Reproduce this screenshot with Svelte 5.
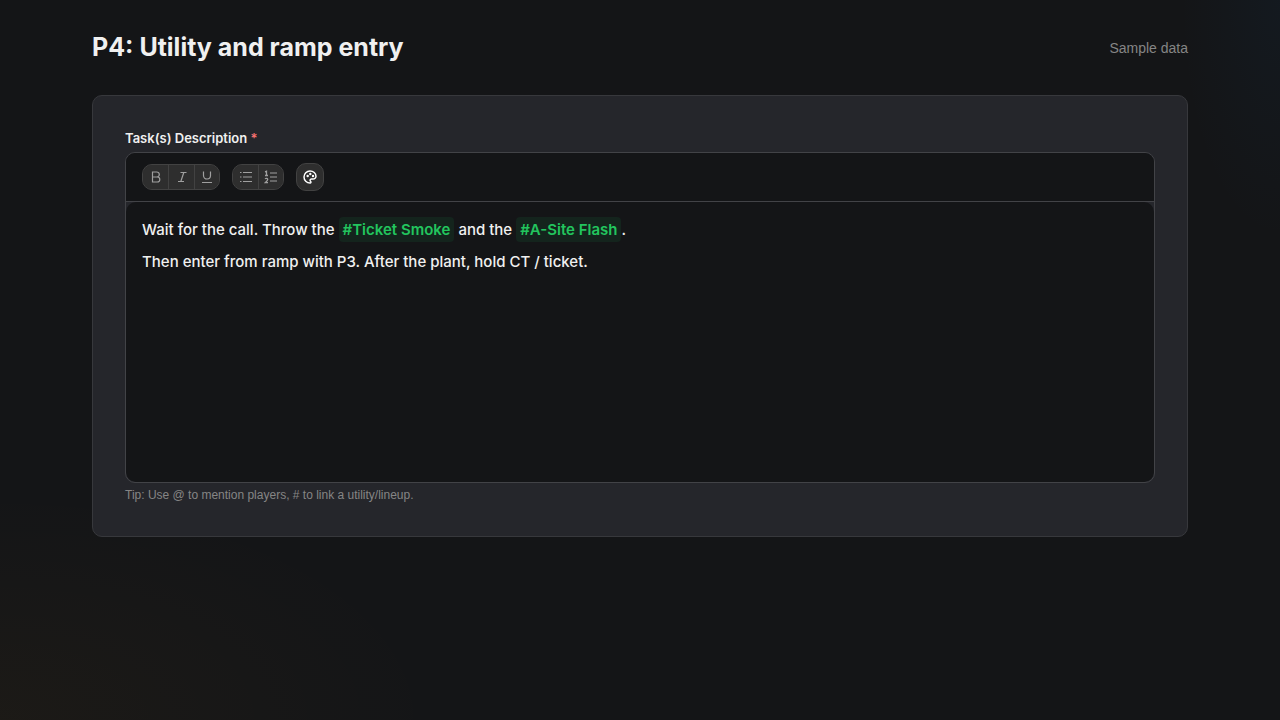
<script lang="ts">
  type Tool = { name: string; label: string };

  const groups: Tool[][] = [
    [
      { name: 'bold', label: 'Bold' },
      { name: 'italic', label: 'Italic' },
      { name: 'underline', label: 'Underline' },
    ],
    [
      { name: 'bullets', label: 'Bullet list' },
      { name: 'numbers', label: 'Numbered list' },
    ],
  ];
</script>

<main class="page">
  <header class="header">
    <h1>P4: Utility and ramp entry</h1>
    <span class="note">Sample data</span>
  </header>

  <section class="card">
    <div class="field-label" id="task-label">Task(s) Description <span class="required">*</span></div>

    <div class="editor">
      <div class="toolbar" role="toolbar" aria-label="Formatting">
        {#each groups as group}
          <div class="group">
            {#each group as tool}
              <button type="button" class="tool" aria-label={tool.label}>
                <svg viewBox="0 0 14 14" width="14" height="14" fill="none" stroke="currentColor">
                  {#if tool.name === 'bold'}
                    <path stroke-width="1.2" d="M3.5 2h4.300a2.500 2.500 0 0 1 0 5H3.500zM3.500 7h4.800a2.500 2.500 0 0 1 0 5H3.500z" />
                  {:else if tool.name === 'italic'}
                    <path stroke-width="1.2" d="M5.500 2.500h6M3 11.500h6M8.800 2.500l-3 9" />
                  {:else if tool.name === 'underline'}
                    <path stroke-width="1.2" d="M3.500 1.500v4a3.500 3.500 0 0 0 7 0v-4M2 12.500h10" />
                  {:else if tool.name === 'bullets'}
                    <path d="M4 2.500h9M4 7h9M4 11.500h9" />
                    <path d="M1 2.500h1.500M1 7h1.500M1 11.500h1.500" />
                  {:else}
                    <path d="M6 3h7M6 7h7M6 11h7" />
                    <path stroke-width="1.3" d="M1 1.800l1.500-.6v4.300M1 5.500h3M1 8.900c1-1 2.700-.6 2.700.6 0 1-1.200 1.900-2.500 3.200H4" />
                  {/if}
                </svg>
              </button>
            {/each}
          </div>
        {/each}
        <button type="button" class="palette" aria-label="Text color">
          <svg viewBox="0 0 24 24" width="16" height="16" fill="none" stroke="currentColor" stroke-width="2.2" stroke-linecap="round" stroke-linejoin="round">
            <path d="M12 21a9 9 0 0 1 0-18c5 0 9 3.600 9 8 0 1.100-.5 2.100-1.300 2.800-.8.800-2 1.200-3.200 1.200H14a2 2 0 0 0-1 3.700A1.300 1.300 0 0 1 12 21" />
            <g fill="currentColor" stroke-width="1.6">
              <circle cx="12.500" cy="7.500" r="1" />
              <circle cx="16.500" cy="10.500" r="1" />
              <circle cx="8.500" cy="10.500" r="1" />
            </g>
          </svg>
        </button>
      </div>

      <div class="content" contenteditable="true" role="textbox" tabindex="0" aria-multiline="true" aria-labelledby="task-label" spellcheck="false">
        <p>Wait for the call. Throw the <span class="mention">#Ticket Smoke</span> and the <span class="mention">#A-Site Flash</span>.</p>
        <p>Then enter from ramp with P3. After the plant, hold CT / ticket.</p>
      </div>
    </div>

    <p class="hint">Tip: Use @ to mention players, # to link a utility/lineup.</p>
  </section>
</main>

<style>
  :global(body) {
    margin: 0;
    background: #141517;
  }
  .page {
    box-sizing: border-box;
    min-height: 100vh;
    padding: 28px 92px;
    background:
      radial-gradient(440px 230px at 0 100%, rgba(245, 158, 11, 0.035), transparent),
      radial-gradient(100px 240px at 100% 0, rgba(20, 110, 190, 0.05), transparent),
      #141517;
    color: #f0f0f0;
    font-family: "Liberation Sans", Arial, sans-serif;
  }
  .header {
    display: flex;
    align-items: center;
    justify-content: space-between;
    margin-bottom: 28px;
  }
  h1,
  .field-label,
  .content {
    font-family: Inter, sans-serif;
  }
  h1 {
    margin: 0;
    font-size: 25px;
    line-height: 39px;
    font-weight: 700;
  }
  .note {
    color: #858585;
    font-size: 14px;
    line-height: 20px;
  }
  .card {
    padding: 32px;
    border: 1px solid #37383c;
    border-radius: 10px;
    background: #25262b;
  }
  .field-label {
    margin-bottom: 4px;
    font-size: 13px;
    line-height: 20px;
    font-weight: 600;
  }
  .required { color: #f87171; }
  .editor {
    border: 1px solid #424347;
    border-radius: 10px;
    background: #25262b;
    overflow: hidden;
  }
  .toolbar {
    display: flex;
    align-items: center;
    gap: 12px;
    padding: 10px 16px;
    border-bottom: 1px solid #424347;
    background: #141517;
  }
  .group {
    display: flex;
    border: 1px solid #424242;
    border-radius: 10px;
    background: #2e2e2e;
    overflow: hidden;
  }
  button {
    display: grid;
    place-items: center;
    padding: 0;
    border: 0;
    background: #2e2e2e;
    cursor: pointer;
  }
  .tool {
    width: 26px;
    height: 24px;
    color: #a0a0a0;
  }
  .tool:first-child,
  .tool:last-child { width: 25px; }
  .tool + .tool { border-left: 1px solid #424242; }
  .palette {
    width: 28px;
    height: 28px;
    border: 1px solid #424242;
    border-radius: 10px;
    color: #fff;
  }
  .content {
    box-sizing: border-box;
    min-height: 280px;
    padding: 12px 16px;
    border-radius: 10px;
    background: #141517;
    font-size: 15px;
    line-height: 32px;
    font-weight: 500;
    outline: none;
  }
  .content p { margin: 0; }
  .mention {
    padding: 3px 4px;
    border-radius: 4px;
    background: #14241d;
    color: #22c55e;
    font-weight: 600;
  }
  .hint {
    margin: 4px 0 0;
    color: #858585;
    font-size: 12px;
    line-height: 17px;
  }
</style>
